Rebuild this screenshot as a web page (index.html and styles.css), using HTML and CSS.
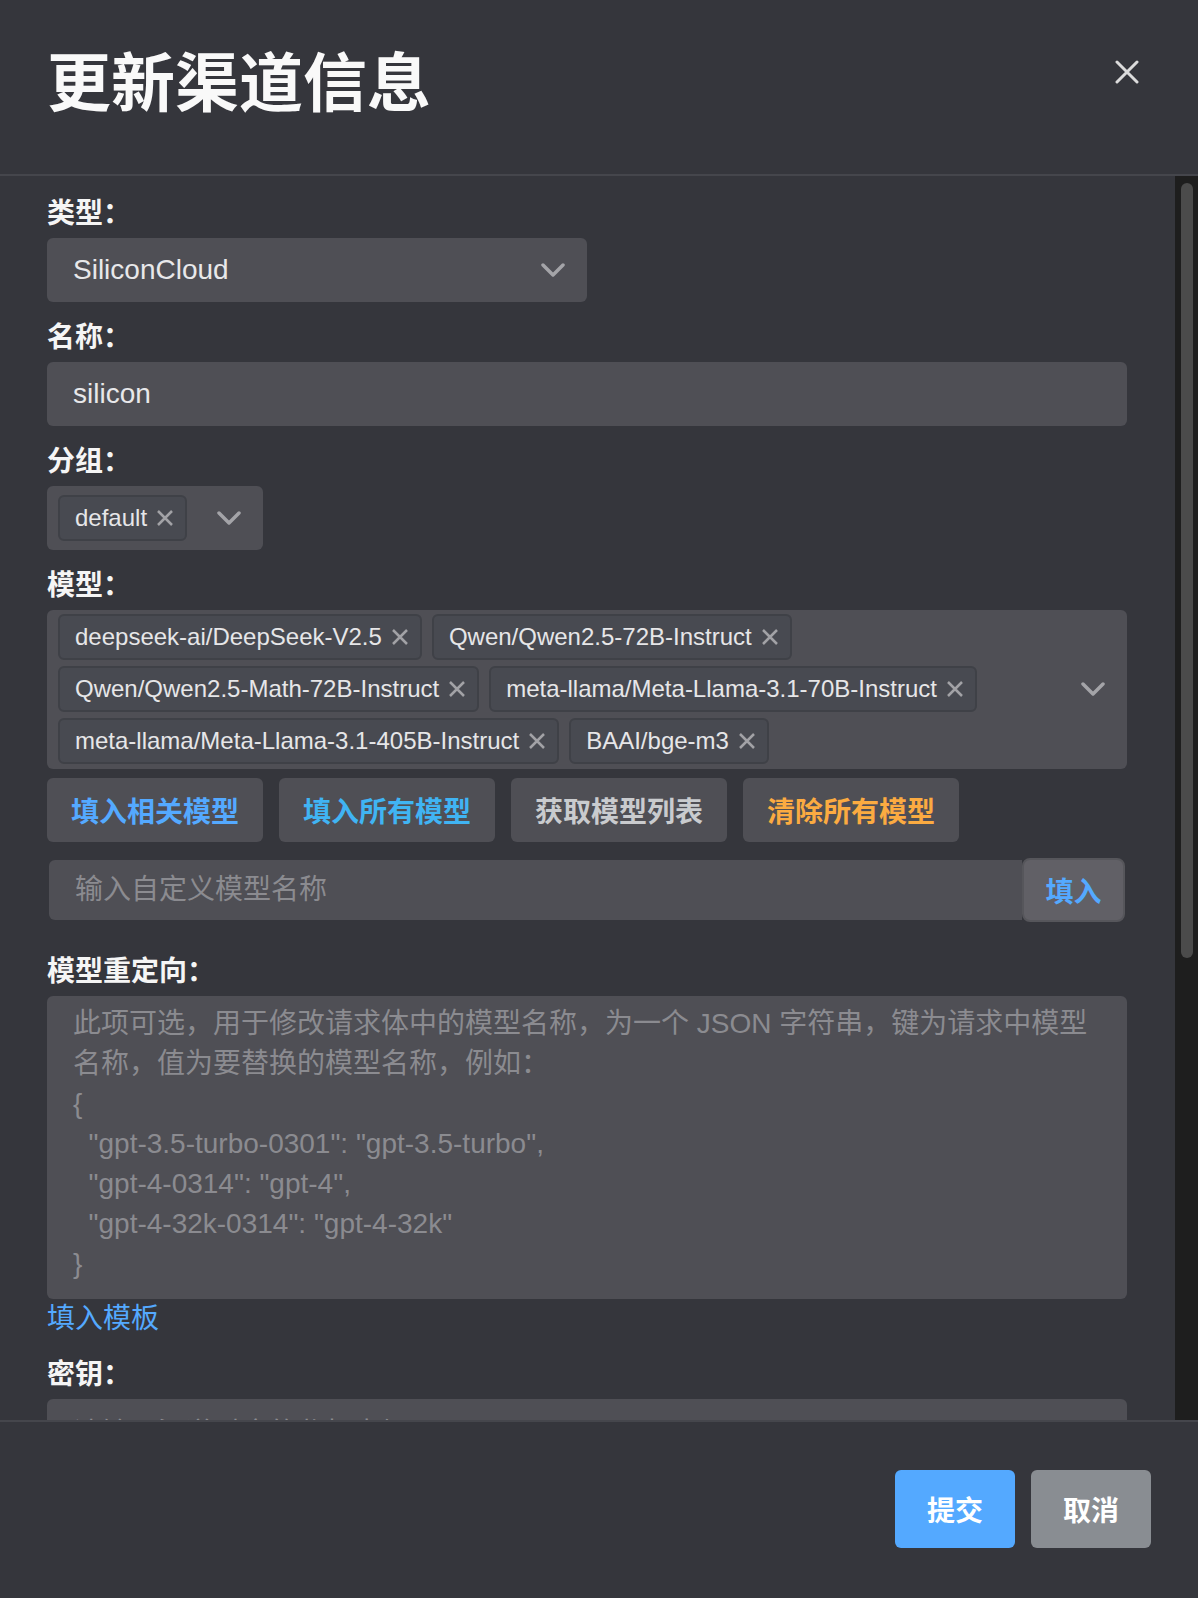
FILE: index.html
```html
<!DOCTYPE html>
<html>
<head>
  <meta charset="utf-8">
  <title>更新渠道信息</title>
  <link rel="stylesheet" href="styles.css">
</head>
<body>
  <div class="modal">
    <header class="modal-header">
      <h1 class="modal-title">更新渠道信息</h1>
      <button class="close-btn" aria-label="关闭">
        <svg width="24" height="24" viewBox="0 0 24 24"><path d="M2 2L22 22M22 2L2 22" stroke="#dcdcdc" stroke-width="3" stroke-linecap="round"/></svg>
      </button>
    </header>

    <div class="modal-main">
      <div class="modal-body">
        <div class="field">
          <div class="label">类型：</div>
          <div class="control select-half">
            <span class="control-text">SiliconCloud</span>
            <span class="arrow"><svg width="24" height="14" viewBox="0 0 24 14"><polyline points="2,2 12,12 22,2" fill="none" stroke="#a4a4a8" stroke-width="3.5" stroke-linecap="round" stroke-linejoin="round"/></svg></span>
          </div>
        </div>

        <div class="field">
          <div class="label">名称：</div>
          <div class="control">
            <span class="control-text">silicon</span>
          </div>
        </div>

        <div class="field">
          <div class="label">分组：</div>
          <div class="control select-group">
            <div class="tags">
              <span class="tag">default<svg class="tag-x" width="18" height="18" viewBox="0 0 18 18"><path d="M2 2L16 16M16 2L2 16" stroke="#a2a2a6" stroke-width="2.5"/></svg></span>
            </div>
            <span class="arrow"><svg width="24" height="14" viewBox="0 0 24 14"><polyline points="2,2 12,12 22,2" fill="none" stroke="#a4a4a8" stroke-width="3.5" stroke-linecap="round" stroke-linejoin="round"/></svg></span>
          </div>
        </div>

        <div class="field">
          <div class="label">模型：</div>
          <div class="control select-models">
            <div class="tags">
              <span class="tag">deepseek-ai/DeepSeek-V2.5<svg class="tag-x" width="18" height="18" viewBox="0 0 18 18"><path d="M2 2L16 16M16 2L2 16" stroke="#a2a2a6" stroke-width="2.5"/></svg></span>
              <span class="tag">Qwen/Qwen2.5-72B-Instruct<svg class="tag-x" width="18" height="18" viewBox="0 0 18 18"><path d="M2 2L16 16M16 2L2 16" stroke="#a2a2a6" stroke-width="2.5"/></svg></span>
              <span class="tag">Qwen/Qwen2.5-Math-72B-Instruct<svg class="tag-x" width="18" height="18" viewBox="0 0 18 18"><path d="M2 2L16 16M16 2L2 16" stroke="#a2a2a6" stroke-width="2.5"/></svg></span>
              <span class="tag">meta-llama/Meta-Llama-3.1-70B-Instruct<svg class="tag-x" width="18" height="18" viewBox="0 0 18 18"><path d="M2 2L16 16M16 2L2 16" stroke="#a2a2a6" stroke-width="2.5"/></svg></span>
              <span class="tag">meta-llama/Meta-Llama-3.1-405B-Instruct<svg class="tag-x" width="18" height="18" viewBox="0 0 18 18"><path d="M2 2L16 16M16 2L2 16" stroke="#a2a2a6" stroke-width="2.5"/></svg></span>
              <span class="tag">BAAI/bge-m3<svg class="tag-x" width="18" height="18" viewBox="0 0 18 18"><path d="M2 2L16 16M16 2L2 16" stroke="#a2a2a6" stroke-width="2.5"/></svg></span>
            </div>
            <span class="arrow"><svg width="24" height="14" viewBox="0 0 24 14"><polyline points="2,2 12,12 22,2" fill="none" stroke="#a4a4a8" stroke-width="3.5" stroke-linecap="round" stroke-linejoin="round"/></svg></span>
          </div>

          <div class="btn-row">
            <button class="btn-light primary">填入相关模型</button>
            <button class="btn-light secondary">填入所有模型</button>
            <button class="btn-light tertiary">获取模型列表</button>
            <button class="btn-light warning">清除所有模型</button>
          </div>

          <div class="custom-model">
            <div class="custom-input">输入自定义模型名称</div>
            <button class="custom-btn">填入</button>
          </div>
        </div>

        <div class="field">
          <div class="label">模型重定向：</div>
          <div class="textarea">此项可选，用于修改请求体中的模型名称，为一个 JSON 字符串，键为请求中模型
名称，值为要替换的模型名称，例如：
{
  "gpt-3.5-turbo-0301": "gpt-3.5-turbo",
  "gpt-4-0314": "gpt-4",
  "gpt-4-32k-0314": "gpt-4-32k"
}</div>
          <a class="link" href="#">填入模板</a>
        </div>

        <div class="field">
          <div class="label">密钥：</div>
          <div class="control">
            <span class="control-text placeholder">请输入渠道对应的鉴权密钥</span>
          </div>
        </div>
      </div>

      <!-- scroll track drawn by hand, headless has no visible scrollbars -->
      <div class="scrollbar">
        <div class="scroll-thumb"></div>
      </div>
    </div>

    <footer class="modal-footer">
      <button class="btn btn-submit">提交</button>
      <button class="btn btn-cancel">取消</button>
    </footer>
  </div>
</body>
</html>
```

FILE: styles.css
```css
html,
body {
  margin: 0;
  height: 100%;
}

body {
  background-color: #35363c;
  color: #e8e8ea;
  font-family: "Liberation Sans", "Noto Sans CJK SC", sans-serif;
}

.modal {
  height: 1598px;
  display: flex;
  flex-direction: column;
}

.modal-header {
  flex-shrink: 0;
  height: 174px;
  border-bottom: 2px solid #45464c;
  display: flex;
  justify-content: space-between;
  align-items: flex-start;
  padding: 0 49px 0 47px;
}

.modal-title {
  margin: 40px 0 0;
  font-size: 64px;
  line-height: 88px;
  font-weight: 700;
  color: #f9f9f9;
}

.close-btn {
  margin-top: 50px;
  width: 44px;
  height: 44px;
  padding: 0;
  border: none;
  background: none;
  display: flex;
  align-items: center;
  justify-content: center;
  cursor: pointer;
}

.modal-main {
  flex: 1;
  min-height: 0;
  display: flex;
}

.modal-body {
  flex: 1;
  overflow: hidden;
  padding: 18px 48px 0 47px;
}

.scrollbar {
  flex-shrink: 0;
  width: 23px;
  box-sizing: border-box;
  padding: 7px 5px 0 6px;
  background-color: #1e1e1e;
}

.scroll-thumb {
  height: 775px;
  background-color: #4b4b4b;
  border-radius: 6px;
}

.field {
  display: flex;
  flex-direction: column;
}

.field + .field {
  margin-top: 16px;
}

.label {
  font-size: 28px;
  line-height: 40px;
  font-weight: 700;
  color: #f5f5f5;
  margin-bottom: 4px;
}

/* inputs and selects */
.control {
  height: 64px;
  background-color: #4f4f55;
  border-radius: 6px;
  display: flex;
  align-items: center;
  font-size: 28px;
  box-sizing: border-box;
}

.control-text {
  padding: 0 26px;
  color: #e8e8ea;
  white-space: nowrap;
}

.control-text.placeholder {
  color: #8b8b90;
}

.select-half {
  width: 540px;
}

.arrow {
  flex-shrink: 0;
  width: 68px;
  margin-left: auto;
  display: flex;
  justify-content: center;
  align-items: center;
}

.select-group {
  width: 216px;
  padding-left: 11px;
}

.select-models {
  height: auto;
  padding: 4px 0 5px 11px;
}

.tags {
  flex: 1;
  display: flex;
  flex-wrap: wrap;
  gap: 6px 10px;
}

.select-group .tags {
  flex: none;
}

.tag {
  height: 46px;
  box-sizing: border-box;
  display: inline-flex;
  align-items: center;
  padding: 0 11px 0 15px;
  background-color: #484a51;
  border: 2px solid #3f4147;
  border-radius: 6px;
  font-size: 24px;
  color: #e6e6e8;
  white-space: nowrap;
}

.tag-x {
  margin-left: 9px;
}

/* model action buttons */
.btn-row {
  display: flex;
  gap: 16px;
  margin-top: 9px;
}

.btn-light {
  width: 216px;
  height: 64px;
  border: none;
  border-radius: 6px;
  background-color: #4f4f55;
  font-family: inherit;
  font-size: 28px;
  font-weight: 700;
  cursor: pointer;
}

.btn-light.primary {
  color: #54a9ff;
}

.btn-light.secondary {
  color: #40b4f3;
}

.btn-light.tertiary {
  color: #c9cbce;
}

.btn-light.warning {
  color: #fbab41;
}

.custom-model {
  display: flex;
  align-items: center;
  margin: 16px 2px 14px;
}

.custom-input {
  flex: 1;
  height: 60px;
  line-height: 60px;
  padding: 0 26px;
  background-color: #4f4f55;
  border-radius: 6px 0 0 6px;
  font-size: 28px;
  color: #8b8b90;
}

.custom-btn {
  width: 103px;
  height: 64px;
  background-color: #616066;
  border: 2px solid #56565b;
  border-radius: 8px;
  color: #54a9ff;
  font-family: inherit;
  font-size: 28px;
  font-weight: 700;
  cursor: pointer;
}

.textarea {
  height: 303px;
  box-sizing: border-box;
  padding: 8px 26px 15px;
  background-color: #4f4f55;
  border-radius: 6px;
  font-size: 28px;
  line-height: 40px;
  color: #8b8b90;
  white-space: pre-wrap;
  overflow: hidden;
}

.link {
  display: block;
  font-size: 28px;
  line-height: 40px;
  color: #54a9ff;
  text-decoration: none;
}

/* footer */
.modal-footer {
  flex-shrink: 0;
  height: 128px;
  border-top: 2px solid #45464c;
  display: flex;
  justify-content: flex-end;
  align-items: flex-start;
  gap: 16px;
  padding: 48px 47px 0 0;
}

.btn {
  width: 120px;
  height: 78px;
  border: none;
  border-radius: 6px;
  color: #ffffff;
  font-family: inherit;
  font-size: 28px;
  font-weight: 700;
  cursor: pointer;
}

.btn-submit {
  background-color: #54a9ff;
}

.btn-cancel {
  background-color: #898d92;
}
```
